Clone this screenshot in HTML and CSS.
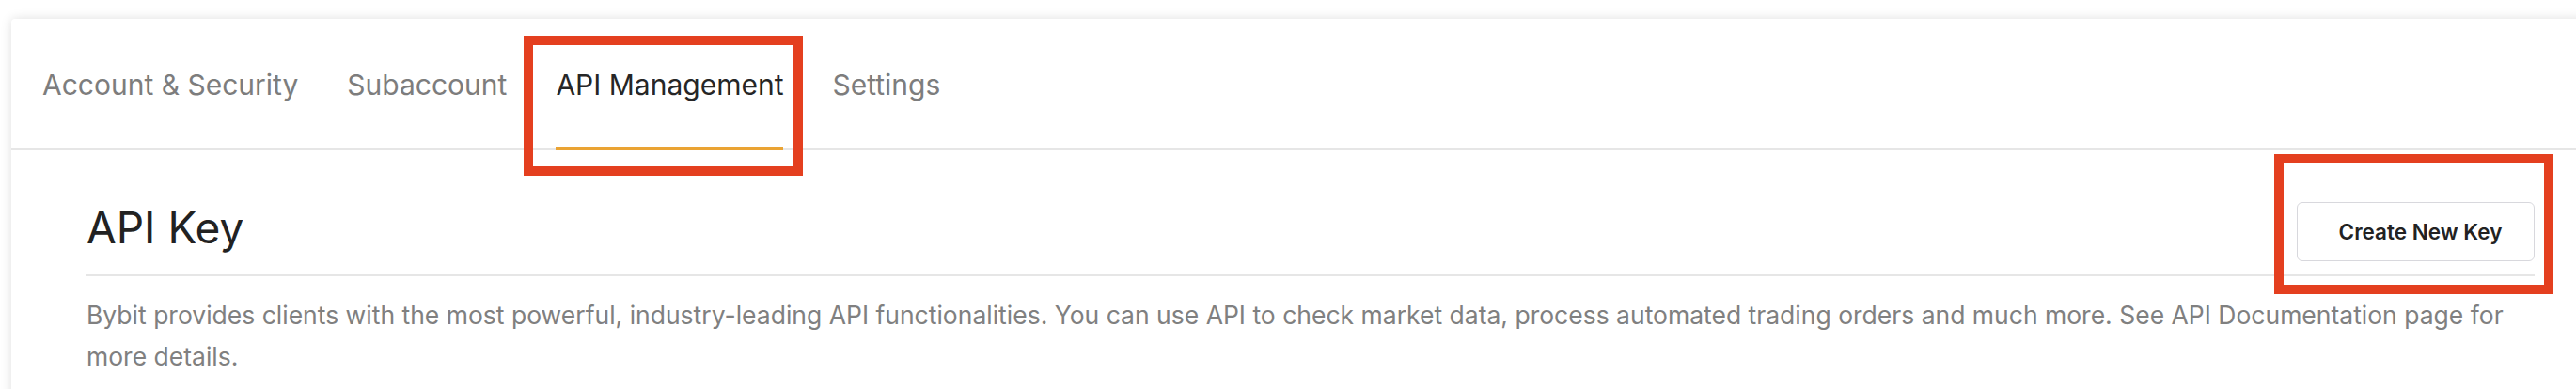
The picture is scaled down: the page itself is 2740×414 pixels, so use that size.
FILE: index.html
```html
<!DOCTYPE html>
<html lang="en">
<head>
<meta charset="UTF-8">
<meta name="viewport" content="width=device-width, initial-scale=1.0">
<title>API Management</title>
<link rel="stylesheet" href="styles.css">
</head>
<body>

<div class="card">
  <nav class="tabs">
    <a class="tab" href="#">Account &amp; Security</a>
    <a class="tab" href="#">Subaccount</a>
    <a class="tab active" href="#">API Management</a>
    <a class="tab" href="#">Settings</a>
  </nav>

  <section class="api-section">
    <div class="section-head">
      <h2>API Key</h2>
      <button type="button" class="btn-create">Create New Key</button>
    </div>
    <p class="intro">Bybit provides clients with the most powerful, industry-leading API functionalities. You can use API to check market data, process automated trading orders and much more. See API Documentation page for more details.</p>
    <p class="intro note">Each account can create up to 20 API keys. Please keep your API key safe and never share it with anyone.</p>
  </section>
</div>

<!-- annotation boxes -->
<div class="mark mark-tab"></div>
<div class="mark mark-btn"></div>

</body>
</html>
```
FILE: styles.css
```css
body {
  margin: 0;
  background: #fff;
  font-family: Inter, "Noto Sans", sans-serif;
  overflow: hidden;
}
.card {
  margin: 20px -20px 0 12px;
  background: #fff;
  border-radius: 4px;
  box-shadow: 0 0 12px rgba(0, 0, 0, 0.13);
  min-height: 420px;
}
.tabs {
  display: flex;
  gap: 52px;
  height: 138px;
  padding: 0 0 0 33px;
  border-bottom: 2px solid #e6e6e6;
}
.tab {
  display: flex;
  align-items: center;
  padding-top: 3px;
  margin-bottom: -2px;
  border-bottom: 4px solid transparent;
  font-size: 30px;
  color: #7d7d7d;
  text-decoration: none;
}
.tab.active {
  color: #262626;
  border-bottom-color: #eaa333;
}
.api-section {
  padding: 0 64px 0 80px;
}
.section-head {
  display: flex;
  justify-content: space-between;
  align-items: flex-start;
  padding: 55px 0 14px;
  border-bottom: 2px solid #e6e6e6;
}
.section-head h2 {
  margin: 0;
  font-size: 46px;
  font-weight: 400;
  line-height: 55px;
  color: #222;
}
.btn-create {
  width: 253px;
  height: 63px;
  background: #fff;
  border: 1px solid #d8d8dd;
  border-radius: 6px;
  font-family: Inter, "Noto Sans", sans-serif;
  font-size: 22.5px;
  font-weight: 600;
  color: #222;
  padding: 0 0 0 10px;
}
.intro {
  margin: 0;
  font-size: 26.5px;
  line-height: 44px;
  color: #808080;
}
.intro:first-of-type {
  margin-top: 19px;
}
.intro.note {
  margin-top: 3px;
}
.mark {
  position: absolute;
  border: 10px solid #e43f1f;
}
.mark-tab {
  left: 557px;
  top: 38px;
  width: 277px;
  height: 129px;
}
.mark-btn {
  left: 2419px;
  top: 164px;
  width: 277px;
  height: 129px;
}
```
